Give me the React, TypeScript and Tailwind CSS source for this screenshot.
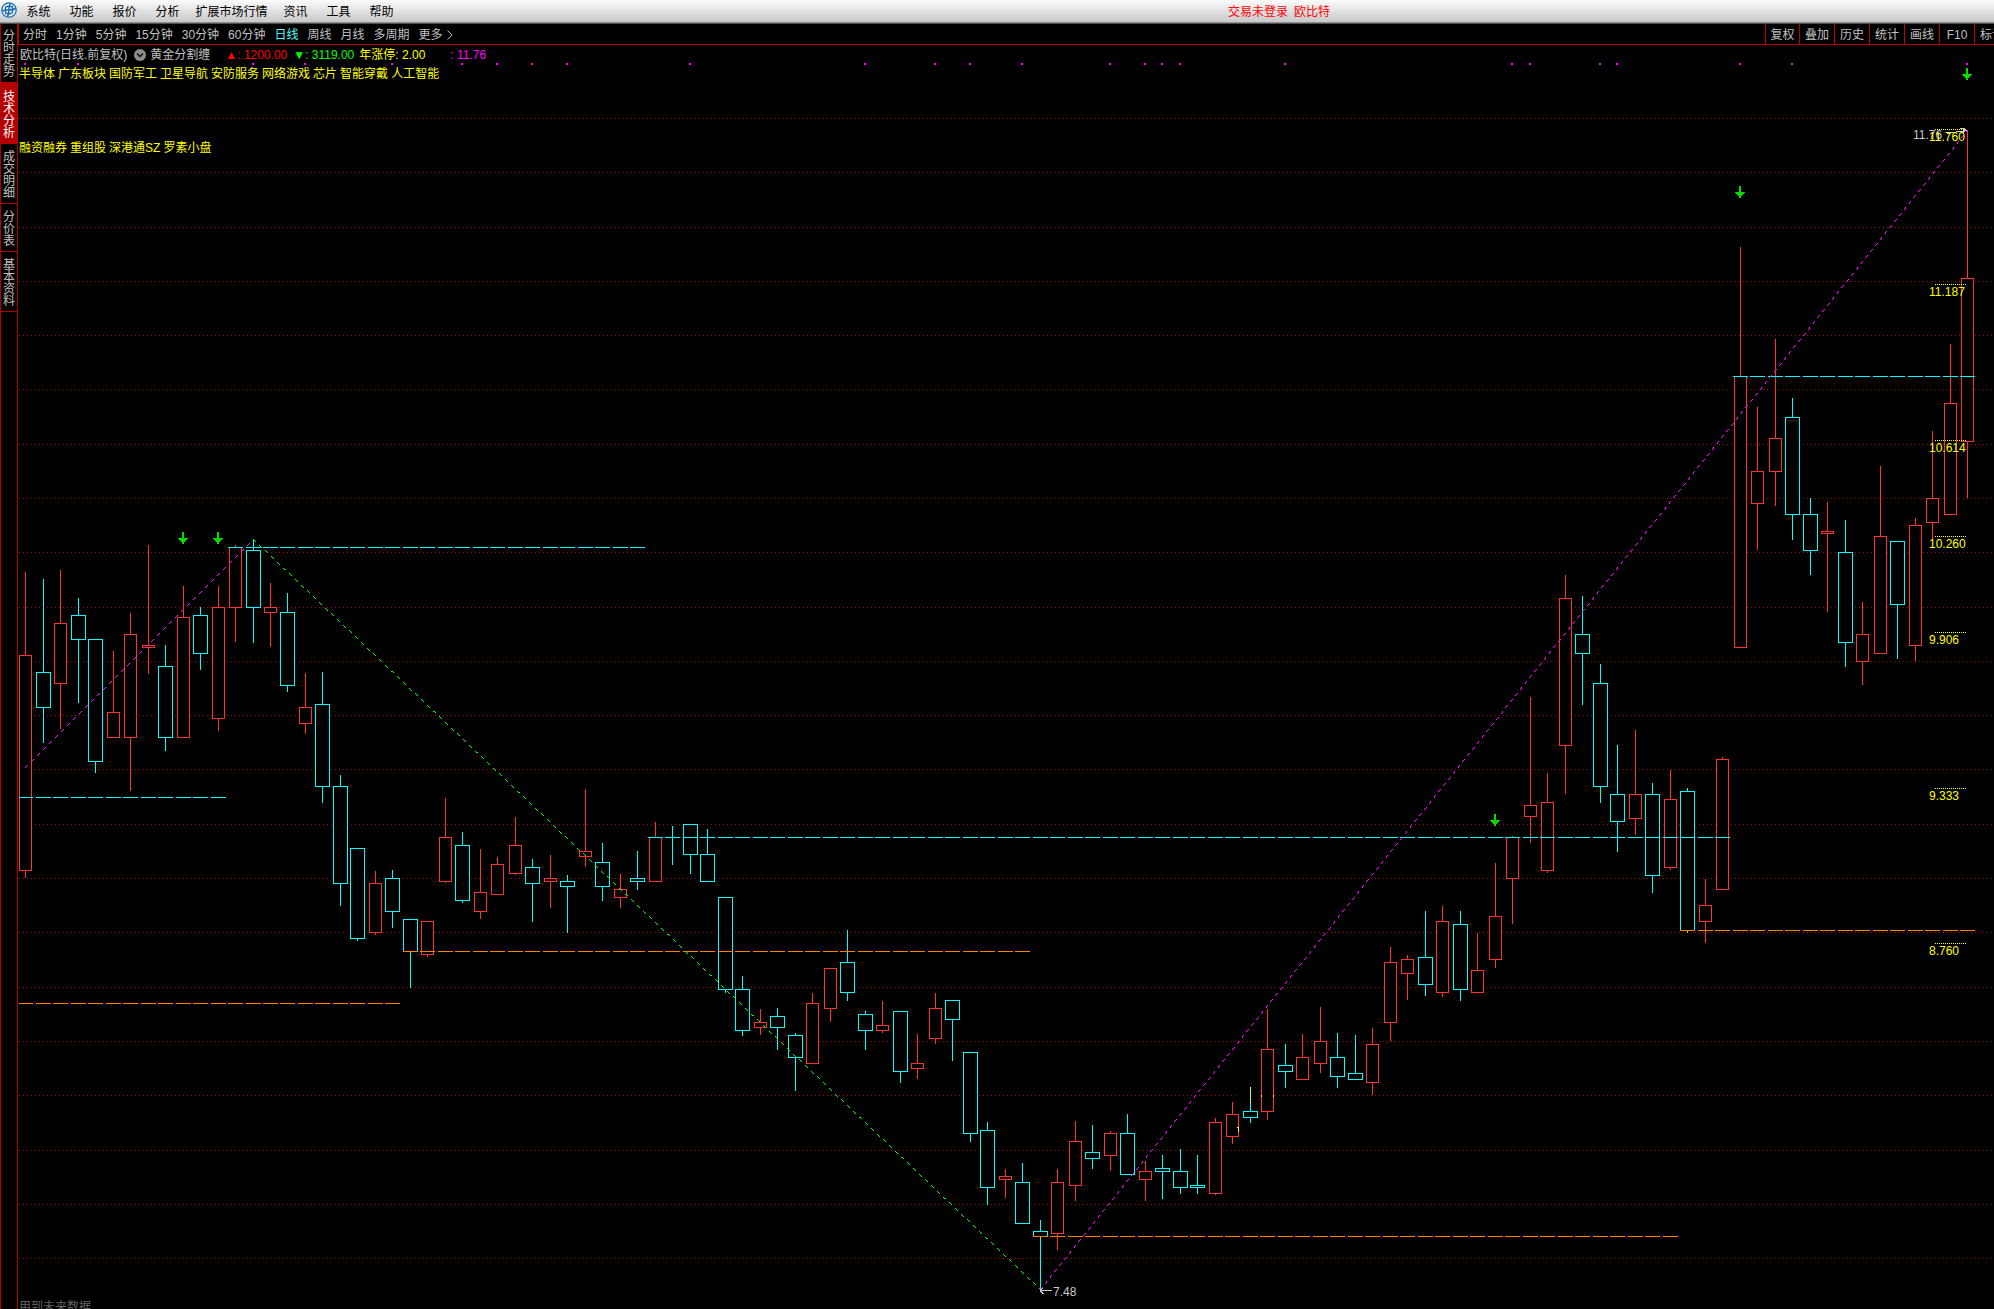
import React from "react";

type Candle = [kind: "R" | "C", high: number, top: number, bottom: number, low: number];

const CANDLES: Candle[] = [
  ["R", 572, 655, 870, 877], ["C", 579, 672, 707, 742], ["R", 570, 623, 683, 728], ["C", 598, 615, 639, 702],
  ["C", 639, 639, 761, 772], ["R", 651, 712, 737, 737], ["R", 613, 634, 737, 790], ["R", 545, 645, 647, 673],
  ["C", 645, 666, 737, 750], ["R", 586, 617, 737, 737], ["C", 607, 615, 653, 669], ["R", 586, 607, 718, 730],
  ["R", 545, 547, 607, 641], ["C", 539, 550, 607, 642], ["R", 583, 607, 612, 646], ["C", 593, 612, 685, 691],
  ["R", 673, 707, 723, 733], ["C", 672, 704, 786, 802], ["C", 775, 786, 883, 905], ["C", 848, 848, 938, 940],
  ["R", 871, 883, 932, 934], ["C", 870, 878, 911, 927], ["C", 919, 919, 951, 987], ["R", 921, 921, 954, 956],
  ["R", 798, 837, 881, 882], ["C", 832, 845, 900, 902], ["R", 849, 892, 911, 918], ["R", 857, 864, 894, 894],
  ["R", 817, 845, 873, 874], ["C", 859, 867, 883, 921], ["R", 855, 878, 881, 907], ["C", 875, 881, 886, 932],
  ["R", 789, 851, 856, 866], ["C", 843, 862, 886, 900], ["R", 874, 889, 897, 907], ["C", 851, 878, 881, 889],
  ["R", 822, 837, 881, 881], ["C", 826, 837, 837, 864], ["C", 824, 824, 854, 873], ["C", 829, 854, 881, 881],
  ["C", 897, 897, 989, 992], ["C", 976, 989, 1030, 1035], ["R", 1009, 1022, 1027, 1034], ["C", 1008, 1016, 1027, 1049],
  ["C", 1033, 1035, 1057, 1090], ["R", 993, 1003, 1063, 1063], ["R", 968, 968, 1008, 1021], ["C", 930, 962, 992, 1000],
  ["C", 1011, 1014, 1030, 1049], ["R", 1001, 1025, 1030, 1032], ["C", 1011, 1011, 1071, 1082], ["R", 1034, 1063, 1068, 1078],
  ["R", 993, 1008, 1038, 1043], ["C", 1000, 1000, 1019, 1060], ["C", 1052, 1052, 1133, 1141], ["C", 1122, 1130, 1187, 1204],
  ["R", 1169, 1176, 1179, 1197], ["C", 1163, 1182, 1223, 1223], ["C", 1220, 1231, 1236, 1289], ["R", 1169, 1182, 1233, 1249],
  ["R", 1121, 1141, 1185, 1200], ["C", 1125, 1152, 1158, 1168], ["R", 1131, 1133, 1155, 1170], ["C", 1114, 1133, 1174, 1174],
  ["R", 1161, 1171, 1179, 1200], ["C", 1155, 1168, 1171, 1198], ["C", 1149, 1171, 1187, 1193], ["C", 1155, 1185, 1187, 1193],
  ["R", 1118, 1122, 1193, 1194], ["R", 1102, 1114, 1136, 1143], ["C", 1087, 1111, 1117, 1122], ["R", 1009, 1049, 1111, 1119],
  ["C", 1044, 1065, 1071, 1087], ["R", 1034, 1057, 1079, 1079], ["R", 1007, 1041, 1063, 1072], ["C", 1033, 1057, 1076, 1087],
  ["C", 1035, 1073, 1079, 1079], ["R", 1028, 1044, 1082, 1094], ["R", 947, 962, 1022, 1040], ["R", 955, 959, 973, 999],
  ["C", 911, 957, 984, 995], ["R", 906, 921, 992, 996], ["C", 911, 924, 989, 1000], ["R", 933, 970, 992, 992],
  ["R", 863, 916, 959, 967], ["R", 836, 837, 878, 923], ["R", 697, 805, 816, 842], ["R", 773, 802, 870, 872],
  ["R", 575, 598, 745, 793], ["C", 596, 634, 653, 704], ["C", 664, 683, 786, 802], ["C", 745, 794, 821, 851],
  ["R", 730, 794, 818, 834], ["C", 783, 794, 875, 892], ["R", 770, 799, 867, 869], ["C", 788, 791, 930, 932],
  ["R", 879, 905, 921, 942], ["R", 757, 759, 889, 889], ["R", 247, 376, 647, 647], ["R", 407, 471, 503, 549],
  ["R", 339, 438, 471, 505], ["C", 398, 417, 514, 539], ["C", 498, 514, 550, 574], ["R", 502, 531, 533, 611],
  ["C", 520, 552, 642, 666], ["R", 602, 634, 661, 684], ["R", 466, 536, 653, 653], ["C", 541, 541, 604, 658],
  ["R", 518, 525, 645, 660], ["R", 431, 498, 522, 538], ["R", 344, 403, 514, 514], ["R", 130, 278, 441, 497],
];

const LEVELS: { y: number; from: number; to: number; color: string }[] = [
  { y: 797, from: 0, to: 11, color: "#00ffff" },
  { y: 1003, from: 0, to: 21, color: "#ff8000" },
  { y: 547, from: 12, to: 35, color: "#00ffff" },
  { y: 951, from: 22, to: 57, color: "#ff8000" },
  { y: 837, from: 36, to: 97, color: "#00ffff" },
  { y: 1236, from: 58, to: 94, color: "#ff8000" },
  { y: 930, from: 95, to: 111, color: "#ff8000" },
  { y: 376, from: 98, to: 111, color: "#00ffff" },
];

const SIGNALS: [index: number, y: number][] = [[9, 532], [11, 532], [84, 814], [98, 186], [111, 68]];

const MARKS = [0, 3, 13, 16, 21, 25, 27, 29, 31, 38, 48, 52, 54, 57, 62, 64, 65, 66, 72, 85, 86, 90, 91, 98, 101, 111];

const PRICES: [label: string, y: number][] = [
  ["11.760", 129], ["11.187", 284], ["10.614", 440], ["10.260", 536], ["9.906", 632], ["9.333", 788], ["8.760", 943],
];

const centerOf = (i: number) => Math.round(25.07 + 17.495 * i);

/* Dashed one-pixel line: three steps drawn, three skipped, along the longer axis. */
function pixelDashes(x1: number, y1: number, x2: number, y2: number) {
  const steps = Math.max(Math.abs(x2 - x1), Math.abs(y2 - y1));
  let d = "";
  for (let k = 0; k <= steps; k++) {
    if (k % 6 > 2) continue;
    const x = Math.round(x1 + ((x2 - x1) * k) / steps);
    const y = Math.round(y1 + ((y2 - y1) * k) / steps);
    d += `M${x} ${y}h1v1h-1z`;
  }
  return d;
}

function Chart() {
  const rows = Array.from({ length: 22 }, (_, i) => Math.round(118 + 54.29 * i));
  return (
    <svg
      className="absolute inset-0 h-full w-full"
      viewBox="18 45 1976 1264"
      preserveAspectRatio="xMinYMin meet"
      shapeRendering="crispEdges"
      role="img"
      aria-label="欧比特日线"
    >
      {rows.map((y) => (
        <line key={y} x1={19} x2={1993} y1={y + 0.5} y2={y + 0.5} stroke="#a00808" strokeDasharray="1 3" />
      ))}
      <rect x={1237} y={1095} width={24} height={1} fill="#000" />

      {CANDLES.map(([kind, high, top, bottom, low], i) => {
        const x = centerOf(i);
        const color = kind === "R" ? "#ff3232" : "#00ffff";
        const half = kind === "R" ? 6 : 7;
        return (
          <g key={i}>
            <rect x={x} y={high} width={1} height={low - high + 1} fill={color} />
            <rect x={x - half} y={top} width={half * 2 + 1} height={bottom - top + 1} fill={color} />
            {bottom - top > 1 && (
              <rect x={x - half + 1} y={top + 1} width={half * 2 - 1} height={bottom - top - 1} fill="#000" />
            )}
          </g>
        );
      })}

      {LEVELS.map(({ y, from, to, color }) => (
        <path
          key={`${y}-${from}`}
          fill={color}
          d={Array.from({ length: to - from + 1 }, (_, k) => {
            const left = Math.max(19, centerOf(from + k) - 7);
            return `M${left} ${y}H${centerOf(from + k) + 8}v1H${left}z`;
          }).join("")}
        />
      ))}

      <path d={pixelDashes(25, 767, 253, 539)} fill="#ff00ff" />
      <path d={pixelDashes(253, 539, 1040, 1289)} fill="#00ff00" />
      <path d={pixelDashes(1040, 1289, 1967, 130)} fill="#ff00ff" />

      <path
        fill="#ffff00"
        d="M1250 1087h1v4h-1zM1250 1092h1v2h-1zM1250 1095h1v2h-1zM1250 1098h1v2h-1zM1250 1102h1v2h-1zM1261 1095h1v2h-1zM1273 1095h1v2h-1zM1237 1127h2v5h-1v-4h-1z"
      />

      {MARKS.map((i) => (
        <rect key={i} x={centerOf(i) - 1} y={63} width={2} height={2} fill="#ff00ff" />
      ))}
      {SIGNALS.map(([i, y]) => {
        const x = centerOf(i);
        return (
          <path
            key={i}
            fill="#00dc00"
            d={`M${x - 1} ${y}h2v6h4v1h-1v1h-1v1h-1v1h-1v2h-2v-2h-1v-1h-1v-1h-1v-1h-1v-1h4z`}
          />
        );
      })}

      <g stroke="#c8c8c8" fill="none">
        <path d="M1040 1290.5H1052M1040 1290.5L1043.5 1287.5M1040 1290.5L1043.5 1294" />
        <path d="M1947 133.500L1966 130.500M1960 128.500H1964L1966 130.500L1962 133" />
      </g>
      <g fontSize={12} fill="#c8c8c8">
        <text x={1053} y={1296}>7.48</text>
        <text x={1913} y={139}>11.76</text>
      </g>
      {PRICES.map(([label, y]) => (
        <g key={label}>
          <line x1={1935} x2={1966} y1={y + 0.5} y2={y + 0.5} stroke="#ffff00" strokeDasharray="1 1" />
          <text x={1929} y={y + 12} fontSize={12} fill="#ffff00">{label}</text>
        </g>
      ))}
    </svg>
  );
}

function Logo() {
  return (
    <svg viewBox="0 0 16 16" className="mb-[3px] ml-px h-4 w-4 shrink-0" fill="none" stroke="#1a6cb0" aria-hidden="true">
      <circle cx="8" cy="8" r="7.2" fill="#e4eef6" strokeWidth="1.300" />
      <path d="M9.500 1.500C7 4 8.500 6 8 8S8 12 6.500 14.500M1.500 9C4 7.500 6 8 8 8S12 8 14.500 6.500" strokeWidth="1.500" />
      <path d="M4.500 11.500V5.500C4.500 4.500 5 4.500 6 4.500H11.500V10C11.500 11 11 11.500 10 11.500H4.500" strokeWidth="1.300" />
    </svg>
  );
}

const MENU = ["系统", "功能", "报价", "分析", "扩展市场行情", "资讯", "工具", "帮助"];
const PERIODS = ["分时", "1分钟", "5分钟", "15分钟", "30分钟", "60分钟", "日线", "周线", "月线", "多周期"];
const TOOLS = ["复权", "叠加", "历史", "统计", "画线", "F10"];
const SIDE = ["分时走势", "技术分析", "成交明细", "分价表", "基本资料"];
const TAGS = ["半导体", "广东板块", "国防军工", "卫星导航", "安防服务", "网络游戏", "芯片", "智能穿戴", "人工智能"];
const TAGS2 = ["融资融券", "重组股", "深港通SZ", "罗素小盘"];

export default function App() {
  return (
    <div className="flex h-screen w-full flex-col overflow-hidden bg-black font-['Liberation_Sans','Noto_Sans_CJK_SC',sans-serif] text-xs leading-4 whitespace-nowrap text-[#c0c0c0]">
      <header className="flex h-6 shrink-0 items-center border-b border-[#505050] bg-linear-to-b from-[#fbfbfb] to-[#c6c6c6] text-black shadow-[inset_0_-1px_0_#909090]">
        <Logo />
        <nav className="flex">
          {MENU.map((m) => (
            <button key={m} type="button" className={m.length > 2 ? "w-[85px]" : "w-[43px]"}>
              {m}
            </button>
          ))}
        </nav>
        <p className="mr-[33.3%] ml-auto flex gap-[6px] text-[#ff0000]">
          <span>交易未登录</span>
          <span>欧比特</span>
        </p>
      </header>

      <div className="flex min-h-0 flex-1">
        <aside className="flex w-[18px] shrink-0 flex-col border-x border-[#b40000]">
          {SIDE.map((s, i) => (
            <button
              key={s}
              type="button"
              className={
                "flex flex-col items-center border-b border-[#b40000] pb-1 leading-3 " +
                (i === 0 ? "pt-[6px]" : i === 1 ? "bg-[#b40000] pt-2 text-white" : "pt-[7px]")
              }
            >
              {s.split("").map((c) => (
                <span key={c}>{c}</span>
              ))}
            </button>
          ))}
        </aside>

        <div className="flex min-w-0 flex-1 flex-col">
          <div className="flex h-[21px] shrink-0 items-stretch border-b border-[#c00000]">
            <nav className="flex items-center gap-[9px] border-l border-[#c00000] pt-px pl-1">
              {PERIODS.map((p) => (
                <button key={p} type="button" className={p === "日线" ? "text-[#54fcfc]" : ""}>
                  {p}
                </button>
              ))}
              <button type="button" className="flex items-center gap-1">
                更多
                <svg viewBox="0 0 6 10" className="h-[10px] w-[6px]" fill="none" stroke="currentColor" aria-hidden="true">
                  <path d="M0.500 0.500L5 5L0.500 9.500" />
                </svg>
              </button>
            </nav>
            <div className="ml-auto flex">
              {TOOLS.map((t, i) => (
                <button
                  key={t}
                  type="button"
                  className={"border-l border-[#c00000] pt-px " + (i === 0 ? "w-[34px]" : "w-[35px]")}
                >
                  {t}
                </button>
              ))}
              <button type="button" className="w-5 overflow-hidden border-l border-[#c00000] pt-px pl-[5px] text-left">
                标记
              </button>
            </div>
          </div>

          <main className="relative min-h-0 flex-1 overflow-hidden">
            <Chart />
            <div className="relative flex h-full flex-col pt-px pl-px">
              <div className="flex h-[18px] shrink-0 items-center pl-px">
                <span>欧比特(日线.前复权)</span>
                <button type="button" aria-label="指标" className="mr-1 ml-[7px]">
                  <svg viewBox="0 0 12 12" className="mb-px block h-3 w-3" aria-hidden="true">
                    <circle cx="6" cy="6" r="6" fill="#8c8c8c" />
                    <path d="M3 4.500L6 7.500L9 4.500" fill="none" stroke="#101010" strokeWidth="1.500" />
                  </svg>
                </button>
                <span>黄金分割缠</span>
                <span className="ml-[15px] text-[#ff0000]">▲: 1200.00</span>
                <span className="ml-[6px] text-[#00ff00]">▼: 3119.00</span>
                <span className="ml-[5px] text-[#ffff00]">年涨停: 2.00</span>
                <span className="ml-[25px] text-[#ff00ff]">: 11.76</span>
              </div>
              <div className="flex h-5 shrink-0 items-center gap-[3px] text-[#ffff00]">
                {TAGS.map((t) => (
                  <span key={t}>{t}</span>
                ))}
              </div>
              <div className="mt-[54px] flex h-5 shrink-0 items-center gap-[3px] text-[#ffff00]">
                {TAGS2.map((t) => (
                  <span key={t}>{t}</span>
                ))}
              </div>
              <p className="mt-auto h-[10px] text-[#646464]">用到未来数据</p>
            </div>
          </main>
        </div>
      </div>
    </div>
  );
}
